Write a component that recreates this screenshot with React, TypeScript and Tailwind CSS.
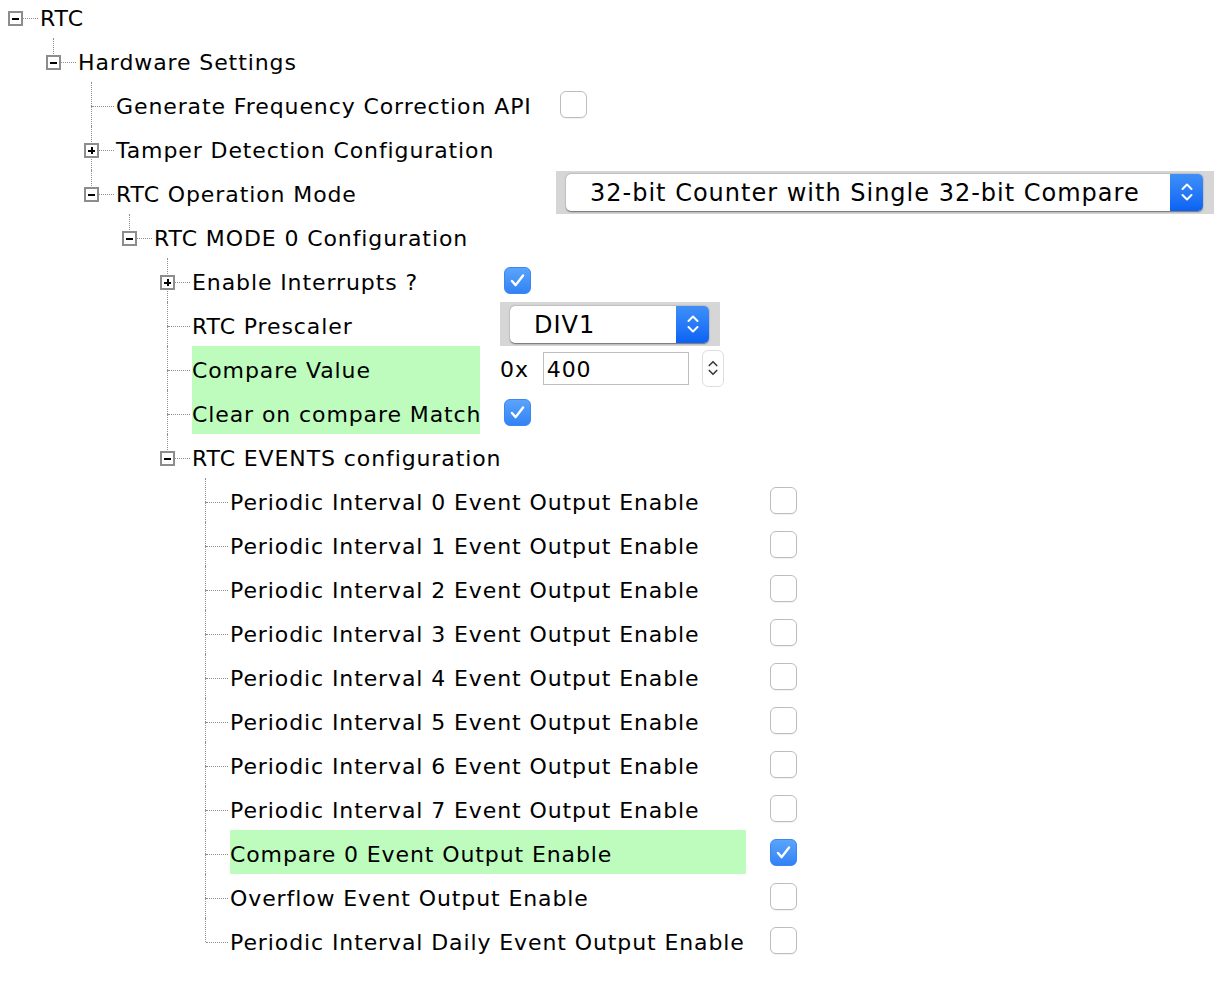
import React from 'react'

type Widget =
  | { kind: 'check'; checked: boolean }
  | { kind: 'select'; value: string; size: 'wide' | 'narrow' }
  | { kind: 'hex'; value: string }

interface TreeNode {
  label: string
  open?: boolean
  widget?: Widget
  highlight?: boolean
  children?: TreeNode[]
}

const events: TreeNode[] = [0, 1, 2, 3, 4, 5, 6, 7].map((n) => ({
  label: `Periodic Interval ${n} Event Output Enable`,
  widget: { kind: 'check', checked: false },
}))

const tree: TreeNode = {
  label: 'RTC',
  open: true,
  children: [
    {
      label: 'Hardware Settings',
      open: true,
      children: [
        { label: 'Generate Frequency Correction API', widget: { kind: 'check', checked: false } },
        { label: 'Tamper Detection Configuration', open: false, children: [] },
        {
          label: 'RTC Operation Mode',
          open: true,
          widget: { kind: 'select', value: '32-bit Counter with Single 32-bit Compare', size: 'wide' },
          children: [
            {
              label: 'RTC MODE 0 Configuration',
              open: true,
              children: [
                { label: 'Enable Interrupts ?', open: false, children: [], widget: { kind: 'check', checked: true } },
                { label: 'RTC Prescaler', widget: { kind: 'select', value: 'DIV1', size: 'narrow' } },
                { label: 'Compare Value', highlight: true, widget: { kind: 'hex', value: '400' } },
                { label: 'Clear on compare Match', highlight: true, widget: { kind: 'check', checked: true } },
                {
                  label: 'RTC EVENTS configuration',
                  open: true,
                  children: [
                    ...events,
                    { label: 'Compare 0 Event Output Enable', highlight: true, widget: { kind: 'check', checked: true } },
                    { label: 'Overflow Event Output Enable', widget: { kind: 'check', checked: false } },
                    { label: 'Periodic Interval Daily Event Output Enable', widget: { kind: 'check', checked: false } },
                  ],
                },
              ],
            },
          ],
        },
      ],
    },
  ],
}

// indent per level, written out so tailwind picks them up
const indent = ['pl-0', 'pl-[38px]', 'pl-[76px]', 'pl-[114px]', 'pl-[152px]', 'pl-[190px]']
// label column width per level (only levels that carry widgets)
const cellWidth: Record<number, string> = {
  2: 'w-[420px]',
  4: 'w-[288px]',
  5: 'w-[516px]',
}

const Chevrons = ({ color, w = 12 }: { color: string; w?: number }) => (
  <svg width={w} height="22" viewBox="0 0 12 22" fill="none">
    <path d="M1.5 8 L6 3.5 L10.5 8" stroke={color} strokeWidth="2" strokeLinecap="round" strokeLinejoin="round" />
    <path d="M1.5 14 L6 18.5 L10.5 14" stroke={color} strokeWidth="2" strokeLinecap="round" strokeLinejoin="round" />
  </svg>
)

const Checkbox = ({ checked }: { checked: boolean }) =>
  checked ? (
    <div className="ml-[4px] flex h-[27px] w-[27px] items-center justify-center rounded-[6px] border border-[#3a86f4] bg-gradient-to-b from-[#5aa4fb] to-[#3382f6]">
      <svg width="27" height="27" viewBox="0 0 27 27" fill="none">
        <path d="M7.5 14 L11.5 18.5 L19.5 8" stroke="white" strokeWidth="2.6" strokeLinecap="round" strokeLinejoin="round" />
      </svg>
    </div>
  ) : (
    <div className="ml-[4px] h-[27px] w-[27px] rounded-[6px] border border-[#bdbdbd] bg-white shadow-[0_1px_1px_rgba(0,0,0,0.06)]" />
  )

const Select = ({ value, size }: { value: string; size: 'wide' | 'narrow' }) => (
  <div
    className={`flex items-center bg-[#d6d6d6] pl-[10px] pr-[11px] ${
      size === 'wide' ? 'h-[43px] w-[658px]' : 'h-[44px] w-[220px]'
    }`}
  >
    <div className="flex h-[37px] flex-1 rounded-[5px] bg-white shadow-[0_0.5px_1.5px_rgba(0,0,0,0.5)]">
      <span className="flex flex-1 items-center pl-[24px] pt-[2px] text-[24px] tracking-[1px]">{value}</span>
      <span className="flex w-[33px] items-center justify-center rounded-r-[5px] bg-gradient-to-b from-[#3f8ff8] to-[#0a62f4]">
        <Chevrons color="white" />
      </span>
    </div>
  </div>
)

const HexInput = ({ value }: { value: string }) => (
  <div className="flex items-center">
    <span className="pt-[3px]">0x</span>
    <div className="ml-[14px] flex h-[33px] w-[146px] items-center border border-[#bfbfbf] bg-white pl-[3px] pt-[3px]">
      {value}
    </div>
    <div className="ml-[13px] flex h-[37px] w-[22px] items-center justify-center rounded-[6px] border border-[#dedede]">
      <Chevrons color="#3a3a3a" w={10} />
    </div>
  </div>
)

const WidgetView = ({ w }: { w: Widget }) => {
  if (w.kind === 'check') return <Checkbox checked={w.checked} />
  if (w.kind === 'select') return <Select value={w.value} size={w.size} />
  return <HexInput value={w.value} />
}

const Expander = ({ open }: { open: boolean }) => (
  <span className="absolute left-[8px] top-[17px] flex h-[15px] w-[15px] items-center justify-center border-2 border-[#8d8d8d] bg-white">
    <span className="relative h-[2px] w-[7px] bg-black">
      {!open && <span className="absolute left-[2.5px] top-[-2.5px] h-[7px] w-[2px] bg-black" />}
    </span>
  </span>
)

const Row = ({ node, level, last }: { node: TreeNode; level: number; last: boolean }) => {
  const expandable = node.children !== undefined
  return (
    <div className={`flex h-[44px] ${indent[level]}`}>
      <div className="relative w-[40px] shrink-0">
        {level > 0 && <span className="absolute left-[15px] top-0 h-[24px] border-l border-dotted border-[#8f8f8f]" />}
        {level > 0 && !last && (
          <span className="absolute bottom-0 left-[15px] top-[24px] border-l border-dotted border-[#8f8f8f]" />
        )}
        <span className="absolute left-[16px] top-[24px] w-[22px] border-t border-dotted border-[#8f8f8f]" />
        {expandable && <Expander open={!!node.open} />}
      </div>
      <div
        className={`flex items-center whitespace-nowrap pt-[4px] ${node.widget ? cellWidth[level] ?? '' : ''} ${
          node.highlight ? 'bg-[#bdfcbd]' : ''
        }`}
      >
        {node.label}
      </div>
      {node.widget && (
        <div className="ml-[20px] flex items-center">
          <WidgetView w={node.widget} />
        </div>
      )}
    </div>
  )
}

const Branch = ({ node, level, last }: { node: TreeNode; level: number; last: boolean }) => (
  <div>
    <Row node={node} level={level} last={last} />
    {node.open &&
      node.children?.map((c, i) => (
        <Branch key={c.label} node={c} level={level + 1} last={i === node.children!.length - 1} />
      ))}
  </div>
)

export default function App() {
  return (
    <div
      className="min-h-[986px] w-[1232px] overflow-hidden bg-white text-[22px] tracking-[0.9px] text-black"
      style={{ fontFamily: '"DejaVu Sans", Verdana, sans-serif' }}
    >
      <div className="mt-[-6px]">
        <Branch node={tree} level={0} last />
      </div>
    </div>
  )
}
